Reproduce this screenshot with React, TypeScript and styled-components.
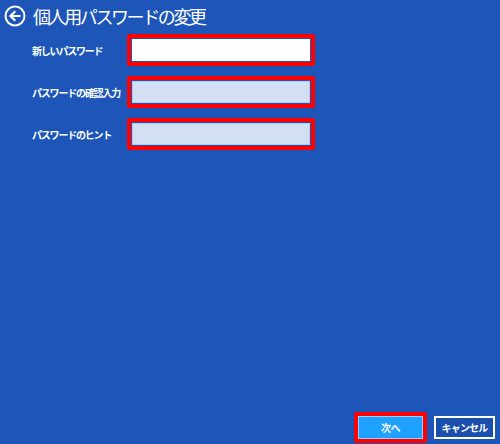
import React from 'react';
import styled, { createGlobalStyle } from 'styled-components';

const FIELDS = [
  { id: 1, label: '新しいパスワード', type: 'password', active: true },
  { id: 2, label: 'パスワードの確認入力', type: 'password', active: false },
  { id: 3, label: 'パスワードのヒント', type: 'text', active: false },
];

export default function App() {
  return (
    <>
      <GlobalStyle />
      <Page>
        <Header>
          <BackButton aria-label="戻る">
            <svg width="22" height="22" viewBox="0 0 22 22">
              <circle cx="11" cy="11" r="9.5" fill="none" stroke="#fff" strokeWidth="2" />
              <path
                d="M15.5 11H7M10.5 7L6.5 11l4 4"
                fill="none"
                stroke="#fff"
                strokeWidth="2.2"
                strokeLinecap="square"
              />
            </svg>
          </BackButton>
          <Title>個人用パスワードの変更</Title>
        </Header>
        <Form>
          {FIELDS.map(field => (
            <Row key={field.id}>
              <Label>{field.label}</Label>
              <Highlight>
                <Input type={field.type} $active={field.active} />
              </Highlight>
            </Row>
          ))}
        </Form>
        <Footer>
          <Highlight>
            <PrimaryButton>次へ</PrimaryButton>
          </Highlight>
          <CancelButton>キャンセル</CancelButton>
        </Footer>
      </Page>
    </>
  );
}

const GlobalStyle = createGlobalStyle`
  html, body {
    margin: 0;
    padding: 0;
    background: #1d56b8;
  }
  * {
    box-sizing: border-box;
  }
`;

const Page = styled.div`
  display: flex;
  flex-direction: column;

  width: 500px;
  height: 444px;

  background: #1d56b8;
  font-family: 'Noto Sans CJK JP', 'Noto Sans', sans-serif;
  color: #fff;
`;

const Header = styled.div`
  display: flex;
  align-items: center;
  gap: 7px;

  height: 30px;
  padding: 1px 0 0 4px;
`;

const BackButton = styled.div`
  display: flex;
  width: 22px;
  height: 22px;
`;

const Title = styled.h1`
  margin: 0;

  font-size: 18px;
  font-weight: 400;
  letter-spacing: -2.4px;
  line-height: 1;
`;

const Form = styled.div`
  display: flex;
  flex-direction: column;
  gap: 10px;

  padding: 4px 0 0 32px;
`;

const Row = styled.div`
  display: grid;
  grid-template-columns: 95px 188px;
  align-items: center;
`;

const Label = styled.span`
  font-size: 10px;
  font-weight: 700;
  letter-spacing: -1.2px;
  white-space: nowrap;
`;

const Highlight = styled.div`
  display: flex;
  border: 4px solid #ff0000;
  border-radius: 2px;
  background: #1d56b8;
`;

const Input = styled.input<{ $active: boolean }>`
  width: 100%;
  height: 22px;
  margin: 1px;

  border: 1px solid ${({ $active }) => ($active ? '#ffffff' : '#b9c8e6')};
  background: ${({ $active }) => ($active ? '#ffffff' : '#d3dff2')};
  outline: none;
`;

const Footer = styled.div`
  display: flex;
  justify-content: flex-end;
  align-items: center;
  gap: 7px;

  margin-top: auto;
  padding: 0 5px 1px 0;
`;

const PrimaryButton = styled.button`
  width: 65px;
  height: 23px;
  padding: 0;

  border: 1px solid #8fd2ff;
  background: #1fa2ff;
  color: #fff;

  font-family: inherit;
  font-size: 10px;
  font-weight: 700;
  letter-spacing: -0.5px;
`;

const CancelButton = styled.button`
  width: 61px;
  height: 23px;
  padding: 0;

  border: 2px solid #fff;
  background: #1a4fab;
  color: #fff;

  font-family: inherit;
  font-size: 10px;
  font-weight: 700;
  letter-spacing: -0.8px;
`;
